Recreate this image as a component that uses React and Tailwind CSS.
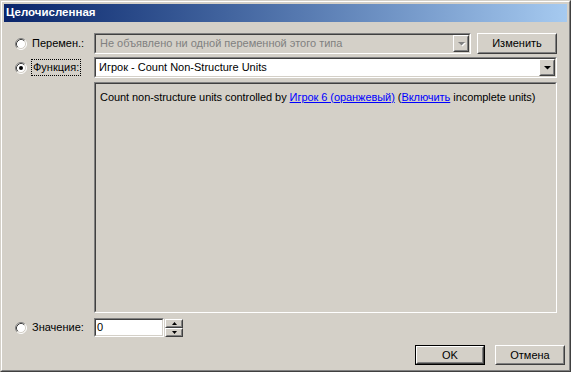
import React from "react";

function Radio({ checked }) {
  return (
    <svg width="12" height="12" viewBox="0 0 12 12" className="shrink-0 block">
      <circle cx="6" cy="6" r="5" fill="#ffffff" />
      <path d="M2.11 9.89 A5.5 5.5 0 0 1 9.89 2.11" fill="none" stroke="#808080" strokeWidth="1" />
      <path d="M9.89 2.11 A5.5 5.5 0 0 1 2.11 9.89" fill="none" stroke="#ffffff" strokeWidth="1" />
      <path d="M2.82 9.18 A4.5 4.5 0 0 1 9.18 2.82" fill="none" stroke="#404040" strokeWidth="1" />
      <path d="M9.18 2.82 A4.5 4.5 0 0 1 2.82 9.18" fill="none" stroke="#d4d0c8" strokeWidth="1" />
      {checked && <circle cx="6" cy="6" r="2" fill="#000000" />}
    </svg>
  );
}

function Raised({ className = "", children }) {
  return (
    <div className={"border border-t-white border-l-white border-r-[#404040] border-b-[#404040] bg-[#d4d0c8] " + className}>
      <div className="w-full h-full border border-t-[#d4d0c8] border-l-[#d4d0c8] border-r-[#808080] border-b-[#808080] flex items-center justify-center">
        {children}
      </div>
    </div>
  );
}

function Sunken({ className = "", inner = "", children }) {
  return (
    <div className={"border border-t-[#808080] border-l-[#808080] border-r-white border-b-white " + className}>
      <div className={"w-full h-full border border-t-[#404040] border-l-[#404040] border-r-[#d4d0c8] border-b-[#d4d0c8] " + inner}>
        {children}
      </div>
    </div>
  );
}

function Arrow({ disabled }) {
  return (
    <svg width="9" height="6" viewBox="0 0 9 6" className="block">
      {disabled && <polygon points="2,2 9,2 5.5,5.5" fill="#ffffff" />}
      <polygon points="1,1 8,1 4.5,4.5" fill={disabled ? "#808080" : "#000000"} />
    </svg>
  );
}

function Btn({ label, def, w }) {
  const core = (
    <Raised className={"h-full " + (def ? "w-full" : w)}>
      <span className="leading-none">{label}</span>
    </Raised>
  );
  if (def) {
    return <div className={"border border-black h-[20px] " + w}>{core}</div>;
  }
  return <div className="h-[20px]">{core}</div>;
}

export default function App() {
  return (
    <div className="w-[571px] h-[372px] bg-[#d4d0c8] border border-t-[#d4d0c8] border-l-[#d4d0c8] border-r-[#404040] border-b-[#404040] font-['Liberation_Sans',Arial,sans-serif] text-[11px] text-black select-none">
      <div className="w-full h-full border border-t-white border-l-white border-r-[#808080] border-b-[#808080] p-[2px] flex flex-col">
        <div className="h-[18px] bg-linear-to-r from-[#0a246a] to-[#a6caf0] flex items-center pl-[2px] text-white font-bold text-[11.5px] leading-none">
          Целочисленная
        </div>

        <div className="flex flex-col pt-[11px]">
          {/* Row 1 */}
          <div className="flex items-center h-[21px]">
            <div className="w-[90px] pl-[11px] flex items-center">
              <Radio />
              <span className="ml-[5px]">Перемен.:</span>
            </div>
            <Sunken className="w-[377px] h-[21px]" inner="bg-[#d4d0c8] flex items-center">
              <span className="flex-1 pl-[4px] text-[#808080] whitespace-nowrap overflow-hidden">
                Не объявлено ни одной переменной этого типа
              </span>
              <Raised className="w-[16px] h-[17px]">
                <Arrow disabled />
              </Raised>
            </Sunken>
            <div className="ml-[6px] w-[80px] h-[21px]">
              <Raised className="w-full h-full">
                <span className="leading-none">Изменить</span>
              </Raised>
            </div>
          </div>

          {/* Row 2 */}
          <div className="flex items-center h-[21px] mt-[3px]">
            <div className="w-[90px] pl-[11px] flex items-center">
              <Radio checked />
              <span className="ml-[4px] border border-dotted border-black px-[1px] h-[17px] flex items-center">Функция:</span>
            </div>
            <Sunken className="w-[463px] h-[21px]" inner="bg-white flex items-center">
              <span className="flex-1 pl-[3px] whitespace-nowrap">Игрок - Count Non-Structure Units</span>
              <Raised className="w-[16px] h-[17px]">
                <Arrow />
              </Raised>
            </Sunken>
          </div>

          {/* Panel */}
          <div className="mt-[4px] ml-[90px]">
            <Sunken className="w-[463px] h-[231px]" inner="bg-[#d4d0c8] pl-[4px] pt-[6px]">
              <p className="whitespace-nowrap leading-[14px] tracking-[-0.06px]">
                Count non-structure units controlled by{" "}
                <span className="text-[#0000ff] underline">Игрок 6 (оранжевый)</span> (
                <span className="text-[#0000ff] underline">Включить</span> incomplete units)
              </p>
            </Sunken>
          </div>

          {/* Row 3 */}
          <div className="flex items-center h-[19px] mt-[5px]">
            <div className="w-[90px] pl-[11px] flex items-center">
              <Radio />
              <span className="ml-[5px]">Значение:</span>
            </div>
            <Sunken className="w-[70px] h-[19px]" inner="bg-white flex items-center pl-[1px]">
              <span>0</span>
            </Sunken>
            <div className="ml-[1px] w-[18px] h-[18px] flex flex-col">
              <Raised className="w-full h-[9px]">
                <svg width="5" height="3" viewBox="0 0 5 3" className="block">
                  <polygon points="2.5,0 5,3 0,3" fill="#000" />
                </svg>
              </Raised>
              <Raised className="w-full h-[9px]">
                <svg width="5" height="3" viewBox="0 0 5 3" className="block">
                  <polygon points="0,0 5,0 2.5,3" fill="#000" />
                </svg>
              </Raised>
            </div>
          </div>

          {/* Buttons */}
          <div className="flex justify-end mt-[8px] pr-[2px] gap-[10px]">
            <Btn label="OK" def w="w-[70px]" />
            <div className="w-[70px]">
              <Btn label="Отмена" w="w-full" />
            </div>
          </div>
        </div>
      </div>
    </div>
  );
}
